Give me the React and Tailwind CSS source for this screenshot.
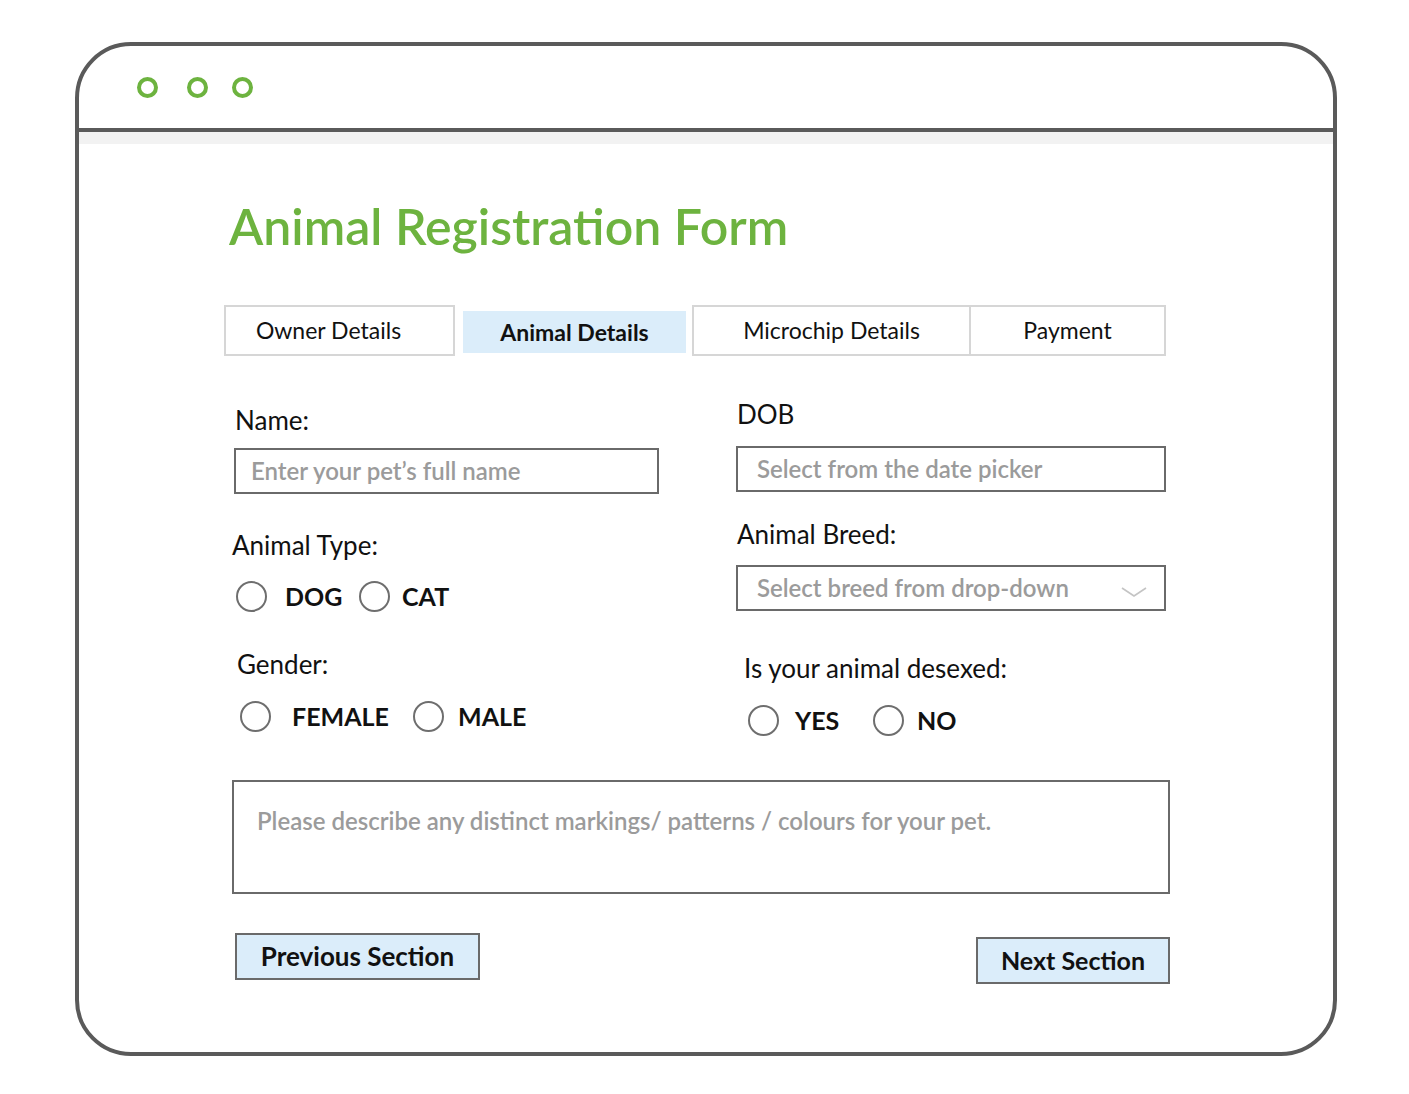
function Radio({ label, width, gap }) {
    return (
        <div className="flex items-center h-[32px]" style={width ? { width } : undefined}>
            <span className="block w-[31px] h-[31px] rounded-full border-2 border-[#6e6e6e] shrink-0" />
            <span className="font-bold text-[25px] leading-none text-[#111]" style={{ marginLeft: gap }}>
                {label}
            </span>
        </div>
    );
}

function Dot() {
    return <span className="block w-[21px] h-[21px] rounded-full border-4 border-[#6db33f]" />;
}

export default function App() {
    return (
        <div className="min-h-screen bg-white pt-[42px] pl-[75px] font-['Lato',sans-serif]">
            <div className="w-[1262px] h-[1014px] border-4 border-[#5a5a5a] rounded-[56px] overflow-hidden flex flex-col">

                {/* window header */}
                <div className="h-[86px] shrink-0 flex items-center pl-[58px] border-b-4 border-[#5a5a5a]">
                    <Dot />
                    <span className="ml-[29px]"><Dot /></span>
                    <span className="ml-[24px]"><Dot /></span>
                </div>
                <div className="h-[12px] shrink-0 bg-[#f2f2f2]" />

                {/* form */}
                <div className="pl-[145px] w-[1087px]">

                    <h1 className="mt-[52px] ml-[5px] h-[60px] leading-[60px] text-[50px] font-semibold text-[#6db33f]">
                        Animal Registration Form
                    </h1>

                    <div className="mt-[49px] flex h-[51px] text-[23px] text-[#111]">
                        <div className="w-[231px] flex items-center justify-center pr-[22px] border-2 border-[#d6d6d6]">
                            Owner Details
                        </div>
                        <div className="ml-[8px] mt-[6px] w-[223px] h-[42px] flex items-center justify-center bg-[#dbedfa] font-bold">
                            Animal Details
                        </div>
                        <div className="ml-[6px] w-[279px] flex items-center justify-center border-2 border-[#d6d6d6]">
                            Microchip Details
                        </div>
                        <div className="w-[195px] flex items-center justify-center border-2 border-l-0 border-[#d6d6d6]">
                            Payment
                        </div>
                    </div>

                    <div className="flex items-start">
                        {/* left column */}
                        <div className="w-[513px] flex flex-col text-[26px] text-[#111]">
                            <div className="mt-[49px] ml-[11px] h-[30px] flex items-center">Name:</div>
                            <div className="mt-[13px] ml-[10px] w-[425px] h-[46px] border-2 border-[#6a6a6a] flex items-center pl-[15px] text-[24px] font-semibold text-[#9b9b9b]">
                                Enter your pet’s full name
                            </div>

                            <div className="mt-[36px] ml-[8px] h-[30px] flex items-center">Animal Type:</div>
                            <div className="mt-[20px] ml-[12px] flex">
                                <Radio label="DOG" width={123} gap={18} />
                                <Radio label="CAT" gap={12} />
                            </div>

                            <div className="mt-[37px] ml-[13px] h-[30px] flex items-center">Gender:</div>
                            <div className="mt-[21px] ml-[16px] flex">
                                <Radio label="FEMALE" width={173} gap={21} />
                                <Radio label="MALE" gap={14} />
                            </div>
                        </div>

                        {/* right column */}
                        <div className="w-[430px] flex flex-col text-[26px] text-[#111]">
                            <div className="mt-[43px] ml-[1px] h-[30px] flex items-center">DOB</div>
                            <div className="mt-[17px] w-[430px] h-[46px] border-2 border-[#6a6a6a] flex items-center pl-[19px] text-[24px] font-semibold text-[#9b9b9b]">
                                Select from the date picker
                            </div>

                            <div className="mt-[27px] ml-[1px] h-[30px] flex items-center">Animal Breed:</div>
                            <div className="mt-[16px] w-[430px] h-[46px] border-2 border-[#6a6a6a] flex items-center pl-[19px] pr-[17px] text-[24px] font-semibold text-[#9b9b9b]">
                                <span className="flex-1">Select breed from drop-down</span>
                                <svg width="26" height="12" viewBox="0 0 26 12" className="mt-[8px]">
                                    <path d="M1 2 L13 10 L25 2" fill="none" stroke="#c4c4c4" strokeWidth="1.6" />
                                </svg>
                            </div>

                            <div className="mt-[42px] ml-[8px] h-[30px] flex items-center">Is your animal desexed:</div>
                            <div className="mt-[21px] ml-[12px] flex">
                                <Radio label="YES" width={125} gap={16} />
                                <Radio label="NO" gap={13} />
                            </div>
                        </div>
                    </div>

                    <div className="mt-[44px] ml-[8px] w-[938px] h-[114px] border-2 border-[#6a6a6a] pl-[23px] pt-[27px] text-[24px] leading-none font-semibold text-[#9b9b9b]">
                        Please describe any distinct markings/ patterns / colours for your pet.
                    </div>

                    <div className="mt-[39px] flex items-start">
                        <button className="ml-[11px] w-[245px] h-[47px] border-2 border-[#6a6a6a] bg-[#dbedfa] text-[26px] font-bold text-[#111]">
                            Previous Section
                        </button>
                        <button className="ml-auto mr-[-4px] mt-[4px] w-[194px] h-[47px] border-2 border-[#6a6a6a] bg-[#dbedfa] text-[25px] font-bold text-[#111]">
                            Next Section
                        </button>
                    </div>
                </div>
            </div>
        </div>
    );
}
